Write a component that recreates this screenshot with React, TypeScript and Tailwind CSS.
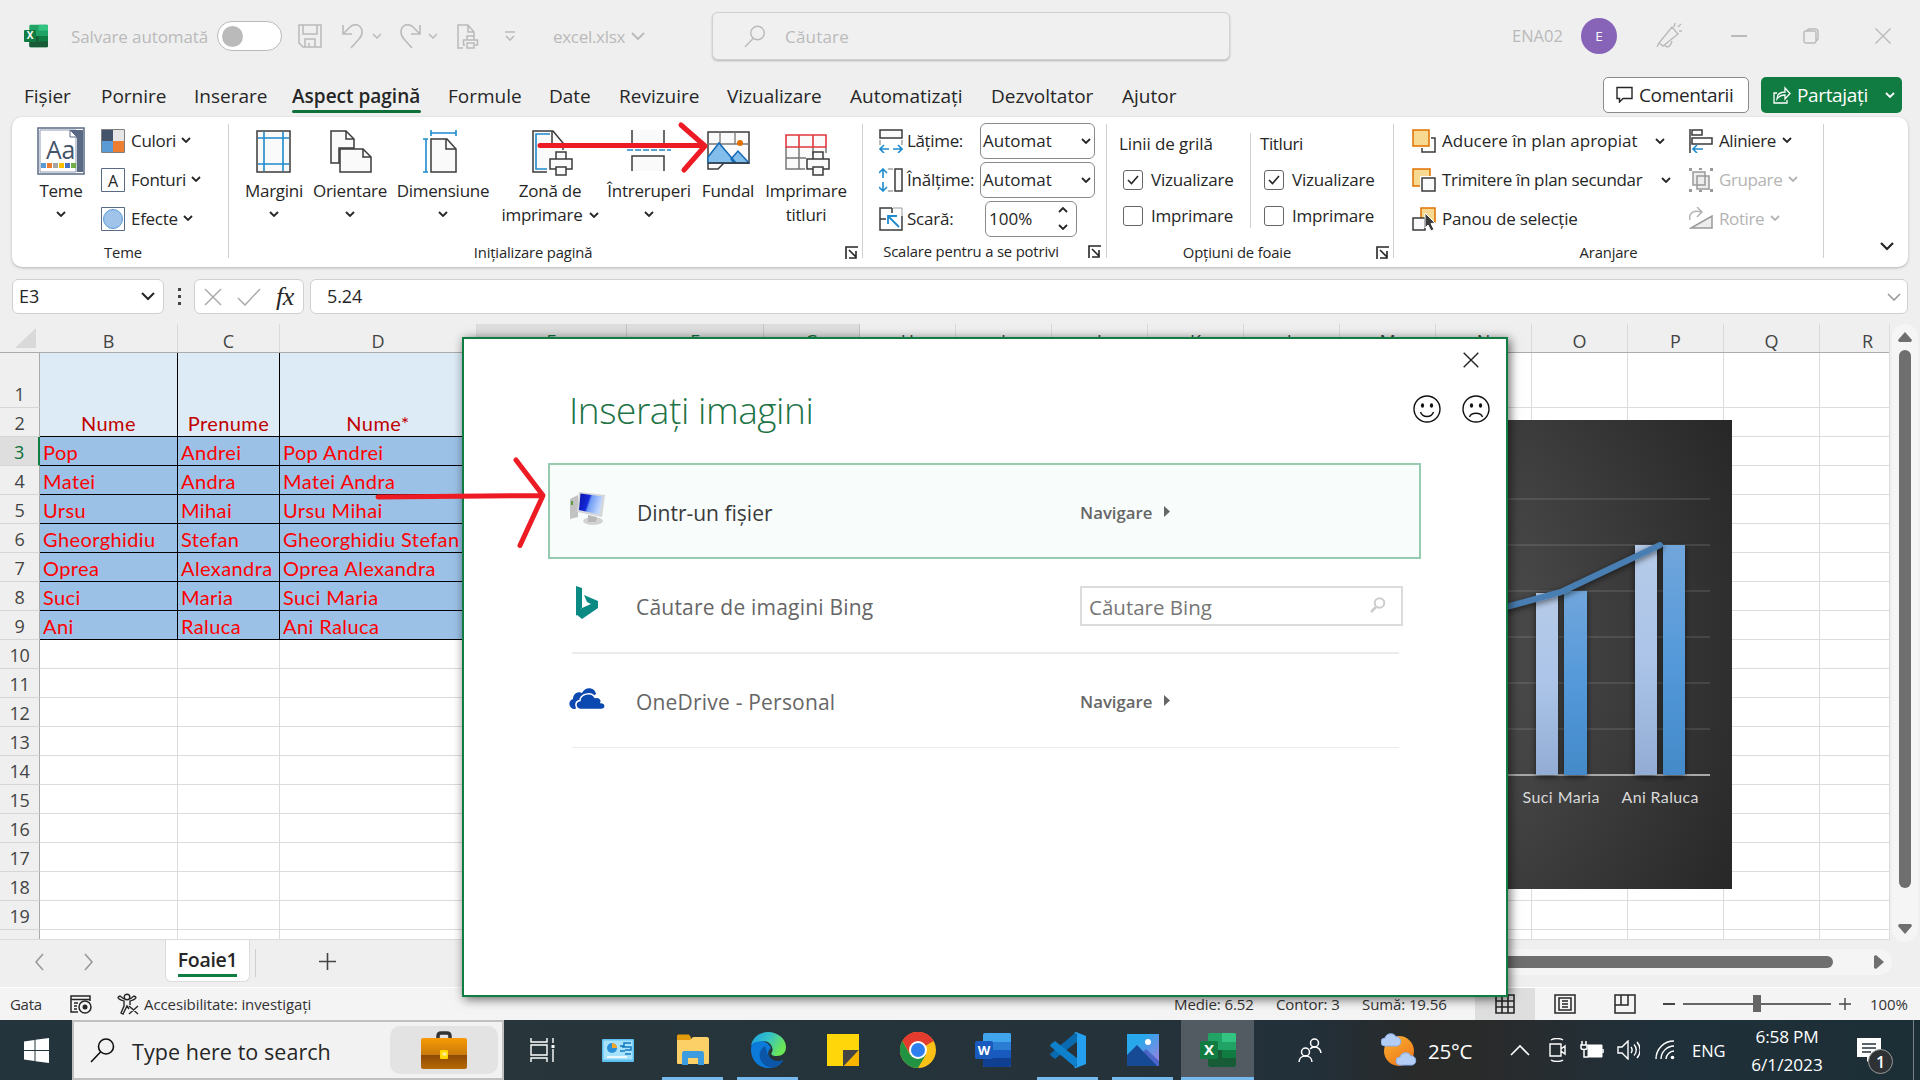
import React from "react";

type P = { children?: React.ReactNode; className?: string };

function Chevron({ className = "", s = 1.8 }: { className?: string; s?: number }) {
  return (
    <svg viewBox="0 0 10 6" className={"h-[6px] w-[10px] shrink-0 " + className} fill="none" stroke="currentColor" strokeWidth={s}>
      <path d="M1 1l4 4 4-4" />
    </svg>
  );
}

function Icon({ w, h, className = "", children }: { w: number; h: number; className?: string; children: React.ReactNode }) {
  return (
    <svg width={w} height={h} viewBox={`0 0 ${w} ${h}`} className={"shrink-0 " + className} fill="none">
      {children}
    </svg>
  );
}

function OfficeLogo({ size, letter, c }: { size: number; letter: string; c: string[] }) {
  return (
    <svg width={size} height={size} viewBox="0 0 36 36" className="shrink-0">
      <rect x="8" y="1" width="28" height="34" rx="2" fill={c[0]} />
      <path d="M22 1h12a2 2 0 012 2v7H22z" fill={c[1]} />
      <path d="M8 10h28v8H8z" fill={c[2]} />
      <path d="M8 18h28v8H8z" fill={c[3]} />
      {letter === "X" && <path d="M22 18h14v8H22z" fill="#107c41" />}
      <path d="M8 26h28v7a2 2 0 01-2 2H10a2 2 0 01-2-2z" fill={c[4]} />
      <rect x="0" y="9" width="18" height="18" rx="1.5" fill={c[5]} />
      <text x="9" y="23" textAnchor="middle" fontFamily="Open Sans, sans-serif" fontWeight="700" fontSize={letter === "W" ? 13 : 15} fill="#fff">
        {letter}
      </text>
    </svg>
  );
}
const excelColors = ["#21a366", "#33c481", "#21a366", "#185c37", "#185c37", "#107c41"];
const wordColors = ["#41a5ee", "#41a5ee", "#2b7cd3", "#185abd", "#103f91", "#185abd"];

function TitleBar() {
  return (
    <div className="flex h-[72px] items-center pl-6 text-[17px] text-[#bababa]">
      <OfficeLogo size={24} letter="X" c={excelColors} />
      <span className="ml-[23px] w-[146px] whitespace-nowrap pt-[2px] tracking-[-0.1px]">Salvare automată</span>
      <div className="flex h-[30px] w-[65px] items-center rounded-full border border-[#bababa] bg-white pl-1">
        <div className="h-[21px] w-[21px] rounded-full bg-[#bababa]" />
      </div>
      <Icon w={24} h={24} className="ml-4">
        <path d="M1 1h22v22H5l-4-4zM5 1v9h14V1M7 23v-8h10v8M11 23v-4" stroke="#bababa" strokeWidth="1.5" />
      </Icon>
      <Icon w={22} h={25} className="ml-5">
        <path d="M1 1v9h9M1 10L8 3c6-5 12-1 12 5 0 3-1 5-3 7l-8 9" stroke="#bababa" strokeWidth="1.6" />
      </Icon>
      <Chevron className="ml-[8px]" s={1.5} />
      <Icon w={22} h={25} className="ml-[17px]">
        <path d="M21 1v9h-9M21 10L14 3C8-2 2 2 2 8c0 3 1 5 3 7l8 9" stroke="#bababa" strokeWidth="1.6" />
      </Icon>
      <Chevron className="ml-[7px]" s={1.5} />
      <Icon w={22} h={25} className="ml-[19px]">
        <path d="M6 24H1V1h10l6 7v4M11 1v7h6M10 16v-4h7v4M8 21H6.500v-5h14v5H18M10 19h7v5h-7z" stroke="#bababa" strokeWidth="1.5" />
      </Icon>
      <Icon w={12} h={10} className="ml-[25px]">
        <path d="M1 1h10M2 5l4 4 4-4" stroke="#bababa" strokeWidth="1.6" />
      </Icon>
      <span className="ml-[37px] w-[78px] whitespace-nowrap pt-[2px] tracking-[-0.3px]">excel.xlsx</span>
      <Icon w={14} h={8}>
        <path d="M1 1l6 6 6-6" stroke="#bababa" strokeWidth="1.8" />
      </Icon>
      <div className="ml-[67px] flex h-[48px] w-[518px] items-center rounded-md border border-[#d2d2d2] bg-[#f0f0f0] pl-[31px] shadow-[0_1px_2px_rgba(0,0,0,0.25)]">
        <Icon w={22} h={23}>
          <circle cx="13.500" cy="8" r="6.800" stroke="#bababa" strokeWidth="1.4" />
          <path d="M9 13.500L1 22" stroke="#bababa" strokeWidth="1.4" />
        </Icon>
        <span className="ml-[19px] pt-[2px] tracking-[0.2px]">Căutare</span>
      </div>
      <span className="ml-[282px] w-[69px] whitespace-nowrap pt-[1px] text-[16.500px]">ENA02</span>
      <div className="flex h-9 w-9 items-center justify-center rounded-full bg-[#8764b8] text-[13.500px] text-white">E</div>
      <Icon w={26} h={26} className="ml-[39px]">
        <path d="M3 20L16 4l6 7L7 23zM3 20l-2 4M9 22c1 3 5 3 7-4M18 4l1-4M22 4l3-3M23 8h3" stroke="#bababa" strokeWidth="1.4" />
      </Icon>
      <div className="ml-[49px] h-[1.500px] w-4 bg-[#bababa]" />
      <Icon w={16} h={16} className="ml-14">
        <path d="M1 5a2 2 0 012-2h8a2 2 0 012 2v8a2 2 0 01-2 2H3a2 2 0 01-2-2zM4 3c0-1 1-2 2.500-2H12a3 3 0 013 3v6c0 1.500-1 2.500-2 2.500" stroke="#bababa" strokeWidth="1.4" />
      </Icon>
      <Icon w={16} h={16} className="ml-14">
        <path d="M.5.5l15 15m0-15l-15 15" stroke="#bababa" strokeWidth="1.4" />
      </Icon>
    </div>
  );
}

function Tabs() {
  const t = "whitespace-nowrap pt-[3px]";
  return (
    <div className="flex h-[45px] items-center pl-6 text-[19px] text-[#262626]">
      <span className={t + " w-[77px]"}>Fișier</span>
      <span className={t + " w-[93px]"}>Pornire</span>
      <span className={t + " w-[98px]"}>Inserare</span>
      <div className="relative w-[156px] pt-[3px]">
        <span className="whitespace-nowrap font-semibold">Aspect pagină</span>
        <div className="absolute bottom-[-3px] left-0 h-[3px] w-[129px] rounded bg-[#0f703b]" />
      </div>
      <span className={t + " w-[101px]"}>Formule</span>
      <span className={t + " w-[70px]"}>Date</span>
      <span className={t + " w-[108px]"}>Revizuire</span>
      <span className={t + " w-[123px]"}>Vizualizare</span>
      <span className={t + " w-[141px]"}>Automatizați</span>
      <span className={t + " w-[131px]"}>Dezvoltator</span>
      <span className={t + " w-[481px]"}>Ajutor</span>
      <div className="flex h-9 w-[146px] items-center rounded-[5px] border border-[#8a8a8a] bg-white pl-3 tracking-[-0.35px]">
        <Icon w={17} h={17}>
          <path d="M1 1.500h15v11H7l-3.500 3.500v-3.500H1z" stroke="#262626" strokeWidth="1.4" />
        </Icon>
        <span className="ml-[6px] pt-[2px]">Comentarii</span>
      </div>
      <div className="ml-3 flex h-9 w-[141px] items-center rounded-[5px] bg-[#107c41] pl-3 text-white">
        <Icon w={18} h={18}>
          <path d="M4 7H1v10h13v-3M4 13c0-5 3-7 8-7V2l5 5.500-5 5.500V9c-4 0-6 1-8 4z" stroke="#fff" strokeWidth="1.3" />
        </Icon>
        <span className="ml-[6px] w-[88px] whitespace-nowrap pt-[2px] tracking-[-0.35px]">Partajați</span>
        <Chevron s={1.8} />
      </div>
    </div>
  );
}

function Big({ w, lines, icon, chev }: { w: string; lines: string[]; icon: React.ReactNode; chev?: "below" | "inline" }) {
  return (
    <div className={"flex flex-col items-center pt-[10px] tracking-[-0.25px] " + w}>
      <div className="flex h-12 items-start justify-center">{icon}</div>
      <span className="mt-1 h-6 whitespace-nowrap leading-6">{lines[0]}</span>
      {lines[1] && (
        <span className="flex h-6 items-center gap-[6px] whitespace-nowrap leading-6">
          {lines[1]}
          {chev === "inline" && <Chevron />}
        </span>
      )}
      {chev === "below" && <Chevron className="mt-2" />}
    </div>
  );
}

function Label({ children, className = "" }: P) {
  return <div className={"flex h-6 items-center justify-center whitespace-nowrap text-[14.800px] tracking-[-0.15px] " + className}>{children}</div>;
}

function Launcher() {
  return (
    <Icon w={13} h={13}>
      <path d="M1 13V1h12M4 4l7 7M11 5v7H4" stroke="#262626" strokeWidth="1.6" />
    </Icon>
  );
}

const G = "#3b3b3b";
const B = "#1e8bcd";

function Check({ on, label }: { on?: boolean; label: string }) {
  return (
    <div className="flex h-9 items-center gap-2 tracking-[-0.2px]">
      <div className="flex h-5 w-5 items-center justify-center rounded-[3px] border-[1.500px] border-[#666]">
        {on && (
          <Icon w={12} h={10}>
            <path d="M1 5l3.500 3.500L11 1" stroke="#262626" strokeWidth="1.6" />
          </Icon>
        )}
      </div>
      {label}
    </div>
  );
}

function Sep() {
  return <div className="mt-[7px] h-[134px] w-px shrink-0 bg-[#d0d0d0]" />;
}

function Ribbon() {
  return (
    <div className="mx-3 flex h-[150px] rounded-[10px] bg-white text-[17px] text-[#262626] shadow-[0_1px_3px_rgba(0,0,0,0.25)]">
      {/* Teme */}
      <div className="w-[216px]">
        <div className="flex h-[123px]">
          <Big
            w="ml-5 w-[58px]"
            lines={["Teme"]}
            chev="below"
            icon={
              <Icon w={48} h={48}>
                <rect x="1" y="1" width="46" height="46" fill="#fff" stroke="#5a6a85" strokeWidth="1.500" />
                <path d="M3 3h36v42H3z" stroke="#8d9bb3" />
                <path d="M33 3h13v42h-6V11z" fill="#5a6a85" />
                <path d="M33 3v7h7z" fill="#fff" stroke="#5a6a85" />
                <text x="9" y="32" fontFamily="Open Sans" fontSize="26" fill="#44546a" textLength="29" lengthAdjust="spacingAndGlyphs">Aa</text>
                <path d="M4 36h5v5H4z" fill="#5b9bd5" />
                <path d="M10 36h5v5h-5z" fill="#ed7d31" />
                <path d="M16 36h5v5h-5z" fill="#a5a5a5" />
                <path d="M22 36h5v5h-5z" fill="#ffc000" />
                <path d="M28 36h5v5h-5z" fill="#4472c4" />
                <path d="M34 36h5v5h-5z" fill="#70ad47" />
              </Icon>
            }
          />
          <div className="ml-[11px] flex flex-col pt-[4px] tracking-[-0.3px]">
            <div className="flex h-[39px] items-center">
              <Icon w={24} h={24}>
                <path d="M1 1h11v11H1z" fill="#44546a" />
                <path d="M12 1h11v11H12z" fill="#e7e6e6" />
                <path d="M1 12h11v11H1z" fill="#5b9bd5" />
                <path d="M12 12h11v11H12z" fill="#ed7d31" />
                <path d="M.5.5h23v23H.5z" stroke="#7f7f7f" />
              </Icon>
              <span className="mr-[5px] ml-[6px]">Culori</span>
              <Chevron className="mb-[2px]" />
            </div>
            <div className="flex h-[39px] items-center">
              <Icon w={24} h={24}>
                <path d="M.5.5h23v23H.5z" stroke="#5a6a85" />
                <text x="12" y="18.500" textAnchor="middle" fontFamily="Open Sans" fontSize="16" fill="#262626">A</text>
              </Icon>
              <span className="mr-[5px] ml-[6px]">Fonturi</span>
              <Chevron className="mb-[2px]" />
            </div>
            <div className="flex h-[39px] items-center">
              <Icon w={24} h={24}>
                <path d="M.5.5h23v23H.5z" stroke="#5a6a85" />
                <circle cx="12" cy="12" r="9.500" fill="#a0c3ea" stroke="#5b9bd5" />
              </Icon>
              <span className="mr-[5px] ml-[6px]">Efecte</span>
              <Chevron className="mb-[2px]" />
            </div>
          </div>
        </div>
        <Label className="pl-[6px]">Teme</Label>
      </div>
      <Sep />
      {/* Page setup */}
      <div className="w-[633px]">
        <div className="flex h-[123px] pl-[9px]">
          <Big
            w="w-[72px]"
            lines={["Margini"]}
            chev="below"
            icon={
              <Icon w={35} h={48} className="mt-[3px] mr-[2px]">
                <path d="M1 1h33v41H1z" fill="#fafafa" stroke={G} strokeWidth="1.500" />
                <path d="M8 2v39M27 2v39M2 8h31M2 34h31" stroke={B} strokeWidth="1.600" />
              </Icon>
            }
          />
          <Big
            w="w-[80px]"
            lines={["Orientare"]}
            chev="below"
            icon={
              <Icon w={42} h={48} className="mt-[3px] ml-[2px]">
                <path d="M9 33H1V1h15l8 8v9H9z" fill="#fafafa" stroke={G} strokeWidth="1.500" />
                <path d="M16 1v8h8" stroke={G} strokeWidth="1.500" />
                <path d="M10 19h23l8 8v15H10z" fill="#fafafa" stroke={G} strokeWidth="1.500" />
                <path d="M33 19v8h8" stroke={G} strokeWidth="1.500" />
              </Icon>
            }
          />
          <Big
            w="w-[106px]"
            lines={["Dimensiune"]}
            chev="below"
            icon={
              <Icon w={34} h={48} className="mt-[3px] mr-[6px]">
                <path d="M8 9h16l9 10v23H8z" fill="#fafafa" stroke={G} strokeWidth="1.500" />
                <path d="M23 9v10h10" stroke={G} strokeWidth="1.500" />
                <path d="M8 3h25M8 0v6M33 0v6M3 9v33M0 9h5M0 42h5" stroke={B} strokeWidth="1.600" />
              </Icon>
            }
          />
          <Big
            w="w-[108px]"
            lines={["Zonă de", "imprimare"]}
            chev="inline"
            icon={
              <Icon w={42} h={48} className="mt-[3px] ml-[6px]">
                <path d="M15 42H1V1h20l10 12v7" fill="#fafafa" stroke={G} strokeWidth="1.500" />
                <path d="M18 4H4v35h11" stroke={B} strokeWidth="1.600" />
                <path d="M20 1v13h12" stroke={G} strokeWidth="1.500" />
                <path d="M24 22h10v8H24z" fill="#fafafa" stroke={G} strokeWidth="1.500" />
                <path d="M18 29h22v10H18z" fill="#fafafa" stroke={G} strokeWidth="1.500" />
                <path d="M24 37h10v8H24z" fill="#fafafa" stroke={G} strokeWidth="1.500" />
              </Icon>
            }
          />
          <Big
            w="w-[90px]"
            lines={["Întreruperi"]}
            chev="below"
            icon={
              <Icon w={44} h={48} className="mt-[3px]">
                <path d="M5 0v14h32V0" fill="#fafafa" stroke={G} strokeWidth="1.500" />
                <path d="M5 41V26h32v15" fill="#fafafa" stroke={G} strokeWidth="1.500" />
                <path d="M0 20h44" stroke={B} strokeWidth="1.600" strokeDasharray="6 2" />
              </Icon>
            }
          />
          <Big
            w="w-[68px]"
            lines={["Fundal"]}
            icon={
              <Icon w={43} h={48} className="mt-1">
                <path d="M1 1h41v31H17l-6 6H1z" fill="#fafafa" stroke={G} strokeWidth="1.500" />
                <path d="M13 1v12M28 1v12M1 13h41" stroke="#777" strokeWidth="1.300" />
                <circle cx="33" cy="12" r="3" fill="#e07000" />
                <path d="M1 26l11-14 17 20H1zM24 28l7-8 11 12H27z" fill="#83bdec" stroke="#1369b5" strokeWidth="1.500" />
                <path d="M1 32h41" stroke={G} strokeWidth="1.500" />
              </Icon>
            }
          />
          <Big
            w="w-[88px]"
            lines={["Imprimare", "titluri"]}
            icon={
              <Icon w={46} h={48} className="mt-[7px] ml-[3px]">
                <path d="M1 1h40v34H1z" fill="#fafafa" />
                <path d="M20 35H1V13M1 24h20M14 13v22M28 13v8M41 13v6" stroke="#777" strokeWidth="1.500" />
                <path d="M1 1h40v12H1zM14 1v12M28 1v12" stroke="#e0383e" strokeWidth="1.600" />
                <path d="M28 18h10v8H28z" fill="#fafafa" stroke={G} strokeWidth="1.500" />
                <path d="M22 25h22v10H22z" fill="#fafafa" stroke={G} strokeWidth="1.500" />
                <path d="M28 33h10v8H28z" fill="#fafafa" stroke={G} strokeWidth="1.500" />
              </Icon>
            }
          />
        </div>
        <div className="flex items-center pl-[141px]">
          <Label className="w-[326px]">Inițializare pagină</Label>
          <div className="ml-[149px]"><Launcher /></div>
        </div>
      </div>
      <Sep />
      {/* Scale */}
      <div className="w-[243px] pt-[4px]">
        <div className="flex h-[39px] items-center pl-4">
          <Icon w={24} h={24}>
            <path d="M1 1h22v8H1z" fill="#fafafa" stroke={G} strokeWidth="1.500" />
            <path d="M1 11v5M23 11v5" stroke="#777" />
            <path d="M1 20h9M14 20h9M5 16l-4 4 4 4M19 16l4 4-4 4" stroke={B} strokeWidth="1.600" />
          </Icon>
          <span className="ml-1 w-[73px] whitespace-nowrap tracking-[-0.35px]">Lățime:</span>
          <div className="flex h-9 w-[115px] items-center justify-between rounded-md border border-[#8a8a8a] pl-[2px] pr-[3px]">
            Automat <Chevron />
          </div>
        </div>
        <div className="flex h-[39px] items-center pl-4">
          <Icon w={24} h={24}>
            <path d="M16 1h7v22h-7z" fill="#fafafa" stroke={G} strokeWidth="1.500" />
            <path d="M9 1h5M9 23h5" stroke="#777" />
            <path d="M4 1v9M4 14v9M0 5l4-4 4 4M0 19l4 4 4-4" stroke={B} strokeWidth="1.600" />
          </Icon>
          <span className="ml-1 w-[73px] whitespace-nowrap tracking-[-0.2px]">Înălțime:</span>
          <div className="flex h-9 w-[115px] items-center justify-between rounded-md border border-[#8a8a8a] pl-[2px] pr-[3px]">
            Automat <Chevron />
          </div>
        </div>
        <div className="flex h-[39px] items-center pl-4">
          <Icon w={24} h={24}>
            <path d="M13 1H1v22h22V9M1 12h6M13 1v5" stroke={G} strokeWidth="1.500" />
            <path d="M14 1h9v8" stroke="#999" />
            <path d="M20 20L9 9M9 17V9h9" stroke={B} strokeWidth="1.800" />
          </Icon>
          <span className="ml-1 w-[78px] whitespace-nowrap tracking-[-0.2px]">Scară:</span>
          <div className="flex h-9 w-[92px] items-center justify-between rounded-md border border-[#8a8a8a] pl-[3px] pr-[8px]">
            100%
            <span className="flex flex-col gap-[11px]">
              <Chevron className="h-[5px] w-[8px] rotate-180" />
              <Chevron className="h-[5px] w-[8px]" />
            </span>
          </div>
        </div>
        <div className="mt-px flex items-center">
          <Label className="ml-[18px] w-[180px]">Scalare pentru a se potrivi</Label>
          <div className="ml-[27px]"><Launcher /></div>
        </div>
      </div>
      <Sep />
      {/* Sheet options */}
      <div className="w-[286px]">
        <div className="flex h-[123px] pt-4">
          <div className="ml-[12px] w-[131px]">
            <div className="mb-[9px] h-5 leading-[22px] tracking-[-0.1px]">Linii de grilă</div>
            <div className="pl-1">
              <Check on label="Vizualizare" />
              <Check label="Imprimare" />
            </div>
          </div>
          <div className="h-[95px] w-px bg-[#d0d0d0]" />
          <div className="ml-[9px]">
            <div className="mb-[9px] h-5 leading-[22px] tracking-[-0.4px]">Titluri</div>
            <div className="pl-1">
              <Check on label="Vizualizare" />
              <Check label="Imprimare" />
            </div>
          </div>
        </div>
        <div className="flex items-center">
          <Label className="ml-[70px] w-[120px]">Opțiuni de foaie</Label>
          <div className="ml-[79px]"><Launcher /></div>
        </div>
      </div>
      <Sep />
      {/* Arrange */}
      <div className="w-[429px]">
        <div className="flex h-[123px] pt-[4px]">
          <div className="w-[277px] pl-[18px]">
            <div className="flex h-[39px] items-center">
              <Icon w={24} h={24}>
                <path d="M19 9h4v14H10v-4" stroke={G} strokeWidth="1.500" />
                <path d="M1 1h16v16H1z" fill="#f8d991" stroke="#e07000" strokeWidth="1.500" />
              </Icon>
              <span className="ml-[6px] w-[213px] whitespace-nowrap">Aducere în plan apropiat</span>
              <Chevron />
            </div>
            <div className="flex h-[39px] items-center">
              <Icon w={24} h={24}>
                <path d="M1 1h17v17H1z" fill="#f8d991" stroke="#e07000" strokeWidth="1.500" />
                <path d="M8 8h16v16H8z" fill="#fff" />
                <path d="M10 10h13v13H10z" fill="#fafafa" stroke={G} strokeWidth="1.500" />
              </Icon>
              <span className="ml-[6px] w-[219px] whitespace-nowrap tracking-[-0.32px]">Trimitere în plan secundar</span>
              <Chevron />
            </div>
            <div className="flex h-[39px] items-center">
              <Icon w={24} h={24}>
                <path d="M9 1h14v14H9z" fill="#f8d991" stroke="#e07000" strokeWidth="1.500" />
                <path d="M1 11h12v12H1z" fill="#fafafa" stroke={G} strokeWidth="1.500" />
                <path d="M13 6l10 10-4 .5 3 6-3 1.500-3-6-3 3z" fill={G} stroke="#fff" />
              </Icon>
              <span className="ml-[6px] whitespace-nowrap tracking-[-0.2px]">Panou de selecție</span>
            </div>
          </div>
          <div className="pl-[18px] tracking-[-0.4px]">
            <div className="flex h-[39px] items-center">
              <Icon w={24} h={24}>
                <path d="M1 0v24M3 1h10v5H3zM3 9h20v6H3z" stroke={G} strokeWidth="1.500" />
                <path d="M4 20h10M8 16l-4 4 4 4" stroke={B} strokeWidth="1.600" />
              </Icon>
              <span className="ml-[6px] mr-[6px] whitespace-nowrap">Aliniere</span>
              <Chevron className="mb-[2px]" />
            </div>
            <div className="flex h-[39px] items-center text-[#b4b4b4]">
              <Icon w={24} h={24}>
                <path d="M4 4h12v13H4zM8 8h12v13H8z" fill="#ededed" stroke="#999" strokeWidth="1.500" />
                <path d="M0 0h3v3H0zM21 0h3v3h-3zM0 21h3v3H0zM21 21h3v3h-3zM10 0h3v2h-3zM10 22h3v2h-3z" fill="#999" />
              </Icon>
              <span className="ml-[6px] mr-[6px] whitespace-nowrap">Grupare</span>
              <Chevron className="mb-[2px]" />
            </div>
            <div className="flex h-[39px] items-center text-[#b4b4b4]">
              <Icon w={24} h={24}>
                <path d="M23 9v12H2z" fill="#ededed" stroke="#999" strokeWidth="1.500" />
                <path d="M1 13C-1 6 5 3 12 5M8 0l5 5-5 5" stroke="#b4b4b4" strokeWidth="1.500" />
              </Icon>
              <span className="ml-[6px] mr-[6px] whitespace-nowrap">Rotire</span>
              <Chevron className="mb-[2px]" />
            </div>
          </div>
        </div>
        <Label>Aranjare</Label>
      </div>
      <Sep />
      <div className="flex flex-1 items-end justify-center pb-4 pl-[41px]">
        <svg width="14" height="9" viewBox="0 0 14 9" fill="none" stroke="#262626" strokeWidth="2.200">
          <path d="M1 1l6 6 6-6" />
        </svg>
      </div>
    </div>
  );
}

function FormulaBar() {
  return (
    <div className="flex h-[57px] pl-3 pt-[12px] pr-3">
      <div className="flex h-[35px] w-[152px] items-center justify-between rounded-md border border-[#d0d0d0] bg-white pl-[6px] pr-2 text-[18px]">
        E3
        <svg width="14" height="9" viewBox="0 0 14 9" fill="none" stroke="#262626" strokeWidth="2">
          <path d="M1 1l6 6 6-6" />
        </svg>
      </div>
      <div className="flex h-[35px] w-[30px] flex-col items-center justify-center gap-1">
        <div className="h-[3px] w-[3px] bg-[#444]" />
        <div className="h-[3px] w-[3px] bg-[#444]" />
        <div className="h-[3px] w-[3px] bg-[#444]" />
      </div>
      <div className="flex h-[35px] w-[110px] items-center rounded-md border border-[#d0d0d0] bg-white pl-[9px]">
        <Icon w={18} h={18}>
          <path d="M1 1l16 16M17 1L1 17" stroke="#ababab" strokeWidth="1.500" />
        </Icon>
        <Icon w={24} h={18} className="ml-[15px]">
          <path d="M1 10l7 7L23 1" stroke="#ababab" strokeWidth="1.500" />
        </Icon>
        <span className="ml-[15px] font-[Liberation_Serif] text-[26px] leading-none tracking-[-0.500px] italic text-[#262626]">fx</span>
      </div>
      <div className="ml-[6px] flex h-[35px] flex-1 items-center justify-between rounded-md border border-[#d0d0d0] bg-white pl-4 pr-[6px] text-[18px] tracking-[-0.1px]">
        5.24
        <svg width="14" height="8" viewBox="0 0 14 8" fill="none" stroke="#999" strokeWidth="1.600">
          <path d="M1 1l6 6 6-6" />
        </svg>
      </div>
    </div>
  );
}

const COLS = "grid grid-cols-[40px_138px_102px_197px_150px_137px_96px_96px_96px_96px_96px_96px_96px_96px_96px_96px_96px_96px]";
const letters = ["B", "C", "D", "E", "F", "G", "H", "I", "J", "K", "L", "M", "N", "O", "P", "Q", "R"];
const people = [
  ["Pop", "Andrei"],
  ["Matei", "Andra"],
  ["Ursu", "Mihai"],
  ["Gheorghidiu", "Stefan"],
  ["Oprea", "Alexandra"],
  ["Suci", "Maria"],
  ["Ani", "Raluca"],
];
const headings = ["Nume", "Prenume", "Nume*"];

function Row({ n }: { n: number }) {
  const p = n >= 3 && n <= 9 ? people[n - 3] : null;
  const texts = p ? [p[0], p[1], p[0] + " " + p[1]] : n === 2 ? headings : ["", "", ""];
  const h = n === 1 ? "h-[55px]" : "h-[29px]";
  return (
    <div className={COLS + " w-[2035px] shrink-0 " + h}>
      <div
        className={
          "flex items-end justify-center border-b pb-px leading-[24px] text-[18px] tracking-[-0.3px] " +
          (n === 3 ? "border-r-2 border-b-[#d4d4d4] border-r-[#107c41] bg-[#dedede] text-[#0f703b]" : "border-r border-b-[#d6d6d6] border-r-[#ababab] bg-[#efefef] text-[#444]")
        }
      >
        {n}
      </div>
      {letters.map((l, i) => {
        if (i < 3) {
          const c = p
            ? "border-r border-b border-black bg-[#9bc2e6] pl-[3px] text-[#ff0000]"
            : n === 2
              ? "justify-center border-r border-b border-black bg-[#ddebf7] text-[#c00000]"
              : n === 1
                ? "border-r border-black bg-[#ddebf7]"
                : "border-r border-b border-[#dcdcdc]";
          return (
            <div key={l} className={"flex items-end overflow-visible whitespace-nowrap font-[Lato] text-[20px] leading-[26px] tracking-[0.400px] " + c}>
              {texts[i]}
            </div>
          );
        }
        return <div key={l} className="border-r border-b border-[#dcdcdc]" />;
      })}
    </div>
  );
}

function Chart() {
  return (
    <svg className="absolute left-[1208px] top-[96px]" width="524" height="469" viewBox="1208 420 524 469">
      <defs>
        <radialGradient id="bg" gradientUnits="userSpaceOnUse" cx="1300" cy="655" r="500">
          <stop offset="0" stopColor="#595959" />
          <stop offset="0.4" stopColor="#4b4b4b" />
          <stop offset="1" stopColor="#262626" />
        </radialGradient>
        <linearGradient id="pale" x1="0" y1="0" x2="0" y2="1">
          <stop offset="0" stopColor="#b6cbe8" />
          <stop offset="0.5" stopColor="#abc4e8" />
          <stop offset="1" stopColor="#92acd4" />
        </linearGradient>
        <linearGradient id="blue" x1="0" y1="0" x2="0" y2="1">
          <stop offset="0" stopColor="#71a6db" />
          <stop offset="0.5" stopColor="#5499da" />
          <stop offset="1" stopColor="#438ac9" />
        </linearGradient>
        <filter id="sh" x="-50%" y="-20%" width="200%" height="140%">
          <feDropShadow dx="0" dy="2" stdDeviation="3" floodColor="#000" floodOpacity="0.6" />
        </filter>
      </defs>
      <rect x="1208" y="420" width="524" height="469" fill="url(#bg)" />
      <path d="M1208 499h502M1208 545h502M1208 591h502M1208 637h502M1208 683h502M1208 729h502" stroke="#fff" strokeOpacity="0.1" strokeWidth="2" />
      <path d="M1208 775h502" stroke="#a8a8a8" strokeWidth="2" />
      <g filter="url(#sh)">
        <rect x="1536" y="593" width="22" height="182" fill="url(#pale)" />
        <rect x="1564" y="591" width="23" height="184" fill="url(#blue)" />
        <rect x="1635" y="545" width="22" height="230" fill="url(#pale)" />
        <rect x="1663" y="545" width="22" height="230" fill="url(#blue)" />
      </g>
      <path d="M1462 619L1561 592L1660 545" stroke="#4a7eb3" strokeWidth="6" strokeLinecap="round" strokeLinejoin="round" fill="none" filter="url(#sh)" />
      <g fontFamily="Lato, sans-serif" fontSize="16" fill="#d9d9d9" textAnchor="middle">
        <text x="1561" y="803" textLength="77">Suci Maria</text>
        <text x="1660" y="803" textLength="77">Ani Raluca</text>
      </g>
    </svg>
  );
}

function Sheet() {
  return (
    <div className="relative flex h-[616px] w-[1920px]">
      <div className="relative flex h-[616px] w-[1890px] flex-col overflow-hidden border-r border-b border-[#dcdcdc] bg-white">
        <div className={COLS + " h-[29px] w-[2035px] shrink-0 border-b border-[#ababab] bg-[#efefef] text-[18px] text-[#444]"}>
          <div className="flex items-end justify-end pr-1 pb-1">
            <svg width="21" height="20"><path d="M21 0v20H0z" fill="#d9d9d9" /></svg>
          </div>
          {letters.map((l, i) => (
            <div
              key={l}
              className={
                "flex items-center justify-center border-r pt-[5px] leading-none " +
                (i >= 3 && i <= 5 ? "border-[#c4c4c4] bg-[#dedede] text-[#0f703b]" : "border-[#dadada]")
              }
            >
              {l}
            </div>
          ))}
        </div>
        {Array.from({ length: 20 }, (_, i) => (
          <Row key={i} n={i + 1} />
        ))}
      </div>
      <div className="ml-[2px] flex h-[618px] w-[26px] flex-col items-center rounded-full bg-[#f5f5f5] pt-2">
        <svg width="14" height="10"><path d="M7 0l7 8-1 2H1L0 8z" fill="#6f6f6f" /></svg>
        <div className="mt-2 h-[538px] w-3 rounded-full bg-[#6f6f6f]" />
        <svg width="14" height="10" className="mt-9"><path d="M7 10L0 2l1-2h12l1 2z" fill="#6f6f6f" /></svg>
      </div>
      <Chart />
    </div>
  );
}

function SheetTabs() {
  return (
    <div className="flex h-[47px] bg-[#efefef]">
      <div className="flex w-[165px] items-start gap-[39px] pt-[13px] pl-[35px]">
        <Icon w={10} h={18}><path d="M8 1L1 9l7 8" stroke="#999" strokeWidth="1.600" /></Icon>
        <Icon w={10} h={18}><path d="M1 1l7 8-7 8" stroke="#999" strokeWidth="1.600" /></Icon>
      </div>
      <div className="flex h-[42px] w-[85px] flex-col items-center rounded-b-md border-x border-b border-[#dcdcdc] bg-white pt-[6px]">
        <span className="text-[19.500px] leading-[28px] font-semibold tracking-[-0.3px] text-[#262626]">Foaie1</span>
        <div className="h-[3px] w-[59px] bg-[#107c41]" />
      </div>
      <div className="mt-[9px] ml-[5px] h-7 w-px bg-[#cfcfcf]" />
      <Icon w={17} h={17} className="mt-[13px] ml-[63px]">
        <path d="M8.500 0v17M0 8.500h17" stroke="#444" strokeWidth="1.600" />
      </Icon>
      <div className="mt-[9px] ml-[1004px] flex h-[26px] w-[552px] items-center rounded-full bg-[#f5f5f5]">
        <div className="h-3 w-[493px] rounded-full bg-[#6f6f6f]" />
        <svg width="10" height="14" className="ml-[41px]"><path d="M10 7L2 14l-2-1V1l2-1z" fill="#6f6f6f" /></svg>
      </div>
    </div>
  );
}

function StatusBar() {
  return (
    <div className="flex h-[33px] items-center border-t border-white bg-[#f4f4f4] pl-[10px] text-[15px] tracking-[-0.1px] text-[#333]">
      <span className="w-[60px] tracking-[-0.3px]">Gata</span>
      <Icon w={22} h={20}>
        <path d="M8 18H1V2h19v5M1 5.500h19M4 9h4M4 12h3M4 15h3" stroke="#262626" strokeWidth="1.500" />
        <circle cx="15" cy="13" r="6" stroke="#262626" strokeWidth="1.500" />
        <circle cx="15" cy="13" r="2.500" fill="#262626" />
      </Icon>
      <Icon w={22} h={22} className="ml-[25px]">
        <circle cx="10" cy="4" r="2.800" stroke="#262626" strokeWidth="1.400" />
        <path d="M1 4c0 3 4 3 6 4v5L4 20l2 1 4-8 2 3M19 4c0 3-4 3-6 4v4M1 4l2-1 4 3M19 4l-2-1-4 3M12 13l9 8M21 13l-9 8" stroke="#262626" strokeWidth="1.400" />
      </Icon>
      <span className="ml-[5px] w-[1030px] whitespace-nowrap">Accesibilitate: investigați</span>
      <span className="w-[102px] whitespace-nowrap">Medie: 6.52</span>
      <span className="w-[86px] whitespace-nowrap">Contor: 3</span>
      <span className="w-[113px] whitespace-nowrap">Sumă: 19.56</span>
      <div className="flex h-8 w-[60px] items-center justify-center bg-[#dedede]">
        <Icon w={20} h={20}><path d="M1 1h18v18H1zM1 7h18M1 13h18M7 1v18M13 1v18" stroke="#262626" strokeWidth="1.600" /></Icon>
      </div>
      <div className="flex w-[60px] justify-center">
        <Icon w={22} h={20}><path d="M1 1h20v18H1zM5 4h12v12H5zM8 7h6M8 10h6M8 13h6" stroke="#262626" strokeWidth="1.500" /></Icon>
      </div>
      <div className="flex w-[60px] justify-center">
        <Icon w={22} h={20}><path d="M1 1h20v18H1zM1 11h13V1M7 1v10" stroke="#262626" strokeWidth="1.500" /></Icon>
      </div>
      <div className="ml-[8px] h-[1.500px] w-[12px] bg-[#444]" />
      <div className="relative ml-2 h-[2px] w-[148px] bg-[#666]">
        <div className="absolute left-[70px] top-[-8px] h-[17px] w-2 bg-[#666]" />
      </div>
      <Icon w={12} h={12} className="ml-2"><path d="M6 0v12M0 6h12" stroke="#444" strokeWidth="1.400" /></Icon>
      <span className="ml-[19px]">100%</span>
    </div>
  );
}

function TaskItem({ children, open, active, w }: { children: React.ReactNode; open?: boolean; active?: boolean; w?: string }) {
  return (
    <div className={"relative flex h-[60px] shrink-0 items-center justify-center " + (w ?? "w-[75px]")}>
      {active && <div className="absolute inset-y-0 left-[2px] w-[73px] bg-[#525b62]" />}
      <div className="relative left-px">{children}</div>
      {open && <div className="absolute bottom-0 left-[8px] h-[3px] w-[61px] bg-[#76b9ed]" />}
      {active && <div className="absolute bottom-0 left-[2px] h-[3px] w-[73px] bg-[#76b9ed]" />}
    </div>
  );
}

function Taskbar() {
  return (
    <div className="flex h-[60px] bg-[linear-gradient(90deg,#24343c_0%,#28363b_25%,#25333b_45%,#26323a_60%,#22303a_68%,#292a29_74%,#292b2c_78%,#20303a_86%,#1c2e36_100%)] text-white">
      <div className="flex w-[72px] shrink-0 items-center justify-center">
        <Icon w={25} h={25}>
          <path d="M0 3.500l10.500-1.500v10H0zM11.500 1.800L25 0v12H11.500zM0 13h10.500v10L0 21.500zM11.500 13H25v12l-13.500-1.800z" fill="#fff" />
        </Icon>
      </div>
      <div className="flex w-[432px] shrink-0 items-center border-2 border-[#c0c0c0] bg-[#f2f2f2] pl-4 text-[#262626]">
        <Icon w={25} h={25}>
          <circle cx="16" cy="8.500" r="7.500" stroke="#111" strokeWidth="1.600" />
          <path d="M10.500 14L1 24" stroke="#111" strokeWidth="1.600" />
        </Icon>
        <span className="ml-[17px] w-[258px] pt-1 text-[21.500px] tracking-[0.050px] whitespace-nowrap">Type here to search</span>
        <div className="flex h-12 w-[108px] items-center justify-center rounded-[10px] bg-[#e3e3e3]">
          <Icon w={46} h={38}>
            <defs>
              <linearGradient id="bc" x1="0" y1="0" x2="0" y2="1">
                <stop offset="0" stopColor="#f79a05" />
                <stop offset="0.54" stopColor="#c97a0a" />
                <stop offset="0.55" stopColor="#8c4a04" />
                <stop offset="1" stopColor="#b86a05" />
              </linearGradient>
            </defs>
            <path d="M17 8V5c0-2 1-3 3-3h6c2 0 3 1 3 3v3" stroke="#333" strokeWidth="3.500" />
            <rect x="0" y="7" width="46" height="31" rx="2" fill="url(#bc)" />
            <rect x="19" y="19" width="8" height="9" rx="1" fill="#ffd800" />
            <rect x="21.500" y="21.500" width="4" height="3" fill="#fff19a" />
          </Icon>
        </div>
      </div>
      <TaskItem>
        <Icon w={26} h={24}>
          <path d="M1 0v4h16V0M1 24v-4h16v4M1 7h16v10H1zM23 0v5M23 11v13" stroke="#fff" strokeWidth="1.400" />
          <path d="M21.500 7h3v3h-3z" fill="#fff" />
        </Icon>
      </TaskItem>
      <TaskItem>
        <Icon w={32} h={24}>
          <rect width="32" height="23" rx="1" y="1" fill="#5cc0f0" />
          <rect x="1.500" y="2.500" width="29" height="19" fill="#a6e2fb" />
          <circle cx="10" cy="10" r="5" fill="#2a8fd6" />
          <path d="M10 5a5 5 0 015 5h-5z" fill="#f5a623" />
          <path d="M18 8h4V5h7M18 13h5M20 9h9v3h-6M23 16h6" stroke="#1478c0" strokeWidth="1.500" />
          <path d="M5 19h20" stroke="#fff" strokeWidth="1.500" />
        </Icon>
      </TaskItem>
      <TaskItem open>
        <Icon w={34} h={32}>
          <path d="M1 2c0-1 .5-1.500 2-1.500h10l2 3v3H1z" fill="#e39c0c" />
          <path d="M1 6h13l3-3h14c1 0 2 1 2 2v24a1 1 0 01-1 1H2a1 1 0 01-1-1z" fill="#fcd066" />
          <path d="M6 31V20c0-2 1-3 2-3h18c1 0 2 1 2 3v11h-6v-7H12v7z" fill="#3d9be0" />
        </Icon>
      </TaskItem>
      <TaskItem open>
        <Icon w={36} h={36}>
          <defs>
            <linearGradient id="ed1" x1="0" y1="0" x2="1" y2="0.400">
              <stop offset="0" stopColor="#1b9de2" />
              <stop offset="0.5" stopColor="#35c1c9" />
              <stop offset="1" stopColor="#6be657" />
            </linearGradient>
          </defs>
          <path d="M2 11C-2 24 6 36 19 36c6 0 12-3 14-8-4 2-10 2-13-2-3-3-2-8 1-10C18 8 6 6 2 11z" fill="#0c7ad8" />
          <path d="M1 13C3 5 10 0 18 0c10 0 18 7 18 15 0 6-4 9-9 9-4 0-7-1-5-4 2-3-1-11-9-11-5 0-9 1-12 4z" fill="url(#ed1)" />
          <path d="M15 14c-5 3-7 9-4 15 3 5 8 7 12 6.500 5-1 8-3 10-7.500-4 2-10 2-13-2-3-3-3-8-5-12z" fill="#0b56a8" />
        </Icon>
      </TaskItem>
      <TaskItem>
        <Icon w={32} h={32}>
          <path d="M0 0h32v32H0z" fill="#ffd60a" />
          <path d="M16 16h16L17 32h-1z" fill="#444" />
          <path d="M32 16v16H17z" fill="#f7b500" />
        </Icon>
      </TaskItem>
      <TaskItem>
        <Icon w={36} h={36}>
          <circle cx="18" cy="18" r="18" fill="#fbc116" />
          <path d="M18 18L2.400 9A18 18 0 0133.600 9z" fill="#e33b2e" />
          <path d="M18 9h15.600a18 18 0 00-31.200 0L10 22z" fill="#e33b2e" />
          <path d="M2.400 9A18 18 0 0018 36l8-13.500H10z" fill="#229342" />
          <circle cx="18" cy="18" r="9" fill="#fff" />
          <circle cx="18" cy="18" r="7" fill="#2d7ff0" />
        </Icon>
      </TaskItem>
      <TaskItem><OfficeLogo size={36} letter="W" c={wordColors} /></TaskItem>
      <TaskItem open>
        <Icon w={36} h={36}>
          <path d="M26 0l2 9L5 27l-4-3-1-2L25 1z" fill="#0a6ab0" />
          <path d="M26 36l2-9L5 9l-4 3-1 2 25 21z" fill="#0f80cc" />
          <path d="M26 0l10 4v28l-10 4c-1 0-1 0-2-1l3-1V2l-3-1z" fill="#25a0f0" />
        </Icon>
      </TaskItem>
      <TaskItem open>
        <Icon w={32} h={32}>
          <defs>
            <linearGradient id="ph" x1="0" y1="0" x2="1" y2="1">
              <stop offset="0.300" stopColor="#28a8ea" />
              <stop offset="1" stopColor="#a77de0" />
            </linearGradient>
          </defs>
          <path d="M0 0h32v32H0z" fill="url(#ph)" />
          <path d="M14 20l5-5 13 12v5H14z" fill="#4a66c9" />
          <path d="M0 21L10 11l20 21H0z" fill="#164a94" />
          <circle cx="21" cy="8" r="3" fill="#fff" />
        </Icon>
      </TaskItem>
      <TaskItem active><OfficeLogo size={36} letter="X" c={excelColors} /></TaskItem>
      <TaskItem w="w-[110px]">
        <Icon w={24} h={26}>
          <circle cx="16.500" cy="6" r="4" stroke="#fff" strokeWidth="1.500" />
          <circle cx="7.500" cy="15" r="4" stroke="#fff" strokeWidth="1.500" />
          <path d="M1 25c0-8 13-8 13 0M12 12c4-4 10-2 11 4" stroke="#fff" strokeWidth="1.500" />
        </Icon>
      </TaskItem>
      <div className="flex w-[144px] shrink-0 items-center pl-[17px]">
        <Icon w={36} h={34}>
          <defs>
            <linearGradient id="sun" x1="0" y1="0" x2="0.600" y2="1">
              <stop offset="0" stopColor="#f9b233" />
              <stop offset="1" stopColor="#f07b1c" />
            </linearGradient>
          </defs>
          <circle cx="18" cy="18" r="15" fill="url(#sun)" />
          <path d="M4 13a4 4 0 010-8c1-5 9-6 11-1 5-1 7 8 1 9z" fill="#b4cdf5" stroke="#8db0ea" />
          <path d="M19 32a4 4 0 010-8c1-5 9-6 11-1 5-1 7 8 1 9z" fill="#b4cdf5" stroke="#8db0ea" />
        </Icon>
        <span className="ml-[11px] pt-[2px] text-[20.500px] tracking-[-0.2px]">25°C</span>
      </div>
      <div className="flex shrink-0 items-center pl-[2px]">
        <Icon w={20} h={12}><path d="M1 11l9-9 9 9" stroke="#fff" strokeWidth="1.600" /></Icon>
        <Icon w={18} h={24} className="ml-[19px]">
          <path d="M1 6h11v12H1zM12 11l4-3v8l-4-3M2 2c3-2 9-2 12 0M2 22c3 2 9 2 12 0" stroke="#fff" strokeWidth="1.400" />
        </Icon>
        <Icon w={24} h={18} className="ml-[13px]">
          <path d="M8 4h14v12H8z" fill="#fff" stroke="#fff" />
          <path d="M23 8v4M2 0v4M6 0v4M1 4h6v3c0 2-6 2-6 0zM4 8v8h4" stroke="#fff" strokeWidth="1.500" />
        </Icon>
        <Icon w={23} h={20} className="ml-[13px]">
          <path d="M1 7h4l6-6v18l-6-6H1zM14 7c1.500 2 1.500 4 0 6M17 4.500c3 3 3 8 0 11M20 2c4 5 4 11 0 16" stroke="#fff" strokeWidth="1.400" />
        </Icon>
        <Icon w={20} h={20} className="ml-[15px]">
          <path d="M1 19C1 9 9 1 19 1M6 19C6 12 12 6 19 6M11 19c0-4 4-8 8-8" stroke="#fff" strokeWidth="1.400" />
          <circle cx="17.500" cy="17.500" r="1.800" fill="#fff" />
        </Icon>
        <span className="ml-[17px] w-[49px] pt-[2px] text-[16.500px]">ENG</span>
        <div className="flex w-[92px] flex-col items-center pt-[2px] text-[17.200px] leading-[28px]">
          <span className="tracking-[-0.2px]">6:58 PM</span>
          <span>6/1/2023</span>
        </div>
      </div>
      <div className="relative ml-[24px] mt-[17px] h-10 w-[50px]">
        <Icon w={25} h={26}>
          <path d="M0 1h24v19h-9l-5 5v-5H0z" fill="#fff" />
          <path d="M5 7h14M5 11h14M5 15h9" stroke="#26323a" strokeWidth="1.300" />
        </Icon>
        <div className="absolute left-[11px] top-[12px] flex h-[25px] w-[25px] items-center justify-center rounded-full border border-[#999] bg-[#2e3235] text-[16px] font-semibold">1</div>
      </div>
      <div className="ml-auto mr-[6px] h-[60px] w-px bg-[#77828a]" />
    </div>
  );
}

function Face({ sad }: { sad?: boolean }) {
  return (
    <Icon w={28} h={28}>
      <circle cx="14" cy="14" r="13" stroke="#111" strokeWidth="1.400" />
      <ellipse cx="9.500" cy="10.500" rx="1.600" ry="2.200" fill="#111" />
      <ellipse cx="18.500" cy="10.500" rx="1.600" ry="2.200" fill="#111" />
      <path d={sad ? "M7.500 22c2-5 11-5 13 0" : "M7.500 17c2 6 11 6 13 0"} stroke="#111" strokeWidth="1.400" />
    </Icon>
  );
}

function Navigate() {
  return (
    <div className="flex items-center text-[16.800px] font-semibold text-[#666]">
      <span className="w-[84px] pt-[3px]">Navigare</span>
      <svg width="6" height="11"><path d="M0 0l6 5.500L0 11z" fill="#666" /></svg>
    </div>
  );
}

function Dialog() {
  return (
    <div className="absolute left-[462px] top-[337px] h-[660px] w-[1046px] border-2 border-[#107c41] bg-white shadow-[2px_2px_10px_rgba(0,0,0,0.6)]">
      <div className="flex h-[47px] items-start justify-end pr-[27px] pt-[13px]">
        <Icon w={16} h={16}><path d="M.7.7l14.600 14.600M15.300.7L.7 15.300" stroke="#222" strokeWidth="1.400" /></Icon>
      </div>
      <div className="flex h-[48px] items-center pl-[105px]">
        <h1 className="w-[844px] text-[37px] leading-[48px] font-light tracking-[-0.450px] whitespace-nowrap text-[#217346]">Inserați imagini</h1>
        <div className="mb-[2px] flex gap-[21px]">
          <Face />
          <Face sad />
        </div>
      </div>
      <div className="ml-[84px] mt-[29px] flex h-[96px] w-[873px] items-center border-2 border-[#97cbb0] bg-[#f8fcfb] text-[21px] text-[#3a3a3a]">
        <Icon w={36} h={36} className="ml-[19px] mb-1">
          <defs>
            <linearGradient id="scr" x1="0" y1="0" x2="1" y2="0.300">
              <stop offset="0" stopColor="#0a14a8" />
              <stop offset="0.450" stopColor="#1428d8" />
              <stop offset="0.550" stopColor="#6f9cf5" />
              <stop offset="1" stopColor="#c4d8ff" />
            </linearGradient>
          </defs>
          <path d="M1 8l8-4v22l-8 2z" fill="#c2c2c2" />
          <path d="M2 10h2v4H2z" fill="#5c9c3c" />
          <path d="M10 1l26 3-3 22-25-5z" fill="#d4d6da" />
          <path d="M11.500 2.500l22 3-3 18L10 19z" fill="url(#scr)" />
          <ellipse cx="24" cy="30" rx="10" ry="4" fill="#d2d2d2" />
          <path d="M19 24l9 2-1 5h-8z" fill="#b8b8b8" />
        </Icon>
        <span className="ml-[32px] w-[443px] pt-[6px]">Dintr-un fișier</span>
        <Navigate />
      </div>
      <div className="ml-[108px] flex h-[95px] w-[827px] items-center border-b-2 border-[#ebebeb] text-[21px] text-[#666]">
        <Icon w={34} h={34} className="mr-[31px] mb-[5px] -ml-px">
          <path d="M5 0l6 2v20l-6 8z" fill="#0b8a84" />
          <path d="M5 28l6-6 9-4-4-2-3-7 14 6v7L11 33z" fill="#0b8a84" />
        </Icon>
        <span className="w-[444px] shrink-0 pt-1 tracking-[0.200px] whitespace-nowrap">Căutare de imagini Bing</span>
        <div className="flex h-10 w-[323px] shrink-0 items-center border-2 border-[#dcdcdc] bg-white pl-[7px] text-[20.500px] text-[#767676]">
          <span className="w-[281px] pt-[3px]">Căutare Bing</span>
          <Icon w={16} h={16} className="mb-[2px]">
            <circle cx="9.500" cy="6" r="4.800" stroke="#ccc" strokeWidth="2" />
            <path d="M6 10l-5 5" stroke="#ccc" strokeWidth="2.500" />
          </Icon>
        </div>
      </div>
      <div className="ml-[108px] flex h-[94px] w-[827px] items-center border-b border-[#ebebeb] text-[21px] text-[#666]">
        <Icon w={38} h={24} className="-ml-[4px] mb-[4px] mr-[30px]">
          <path d="M7 22C1 22-1 14 5 12c0-5 5-8 9-6C17-1 27 0 28 7" fill="#0b49b0" />
          <path d="M13 22.500c-6 0-7-8-1-9 0-6 11-10 15-3 5-1 7 3 6 5 5 0 6 7 0 7z" fill="#0b49b0" stroke="#fff" strokeWidth="1.500" />
        </Icon>
        <span className="w-[444px] pt-1 tracking-[0.200px] whitespace-nowrap">OneDrive - Personal</span>
        <Navigate />
      </div>
    </div>
  );
}

export default function App() {
  return (
    <div className="relative flex h-[1080px] w-[1920px] flex-col overflow-hidden bg-[#efefef] font-['Open_Sans',sans-serif] text-[#262626]">
      <TitleBar />
      <Tabs />
      <Ribbon />
      <FormulaBar />
      <Sheet />
      <SheetTabs />
      <StatusBar />
      <Taskbar />
      <Dialog />
      <svg className="pointer-events-none absolute left-0 top-0" width="1920" height="1080" fill="none" stroke="#ed1c24" strokeWidth="5" strokeLinecap="round" strokeLinejoin="round">
        <path d="M540 145.500h163M681 125l24 21-21 24" />
        <path d="M378 497l165-1.500M516 460l27 35.500-23 50" />
      </svg>
    </div>
  );
}
